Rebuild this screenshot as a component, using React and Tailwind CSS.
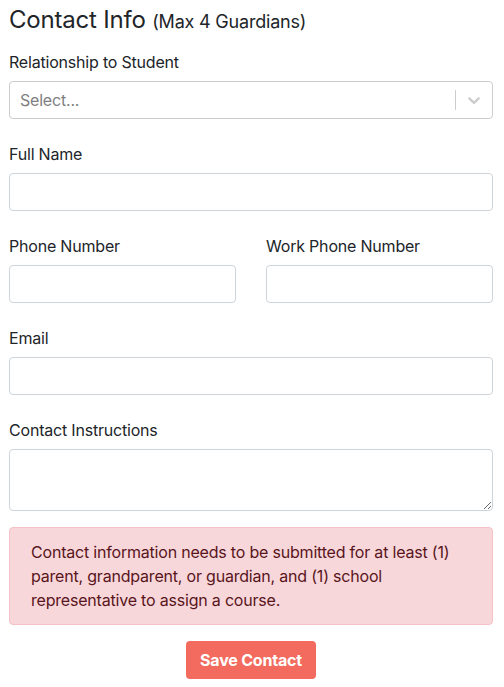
import React from "react";

const font = { fontFamily: "Inter, 'Open Sans', sans-serif" };

function Label({ children }) {
  return <label className="block text-[16px] leading-[24px] text-[#212529] mb-[7px]">{children}</label>;
}

function Input() {
  return <input className="block w-full h-[38px] border border-[#ced4da] rounded-[4px] bg-white" />;
}

export default function App() {
  return (
    <div style={font} className="w-[504px] h-[687px] bg-white pl-[9px] pr-[11px] pt-[2px] tracking-[-0.2px]">
      <h2 className="text-[24px] leading-[36px] text-[#212529] mb-[10px]">
        Contact Info <span className="text-[18px]">(Max 4 Guardians)</span>
      </h2>

      <div className="mb-[23px]">
        <Label>Relationship to Student</Label>
        <div className="flex items-center h-[38px] border border-[#cccccc] rounded-[4px] bg-white">
          <span className="flex-1 pl-[10px] text-[16px] text-[#808080]">Select...</span>
          <span className="w-px h-[20px] bg-[#cccccc]"></span>
          <span className="w-[36px] flex justify-center text-[#cccccc]">
            <svg width="20" height="20" viewBox="0 0 20 20" fill="currentColor">
              <path d="M4.516 7.548c0.436-0.446 1.043-0.481 1.576 0l3.908 3.747 3.908-3.747c0.533-0.481 1.141-0.446 1.574 0 0.436 0.445 0.408 1.197 0 1.615-0.406 0.418-4.695 4.502-4.695 4.502-0.217 0.223-0.502 0.335-0.787 0.335s-0.57-0.112-0.789-0.335c0 0-4.287-4.084-4.695-4.502s-0.436-1.170 0-1.615z" />
            </svg>
          </span>
        </div>
      </div>

      <div className="mb-[23px]">
        <Label>Full Name</Label>
        <Input />
      </div>

      <div className="grid grid-cols-2 gap-[30px] mb-[23px]">
        <div>
          <Label>Phone Number</Label>
          <Input />
        </div>
        <div>
          <Label>Work Phone Number</Label>
          <Input />
        </div>
      </div>

      <div className="mb-[23px]">
        <Label>Email</Label>
        <Input />
      </div>

      <div className="mb-[16px]">
        <Label>Contact Instructions</Label>
        <textarea className="block w-full h-[62px] border border-[#ced4da] rounded-[4px] bg-white resize-y" />
      </div>

      <div className="border border-[#f5c2c7] bg-[#f8d7da] rounded-[4px] pl-[21px] pr-[20px] py-[12px] text-[16px] leading-[24px] text-[#58151c] mb-[16px]">
        Contact information needs to be submitted for at least (1) parent, grandparent, or guardian, and (1) school representative to assign a course.
      </div>

      <div className="flex justify-center">
        <button className="h-[38px] px-[14px] rounded-[4px] bg-[#f26b5e] text-white font-bold text-[16px]">
          Save Contact
        </button>
      </div>
    </div>
  );
}
